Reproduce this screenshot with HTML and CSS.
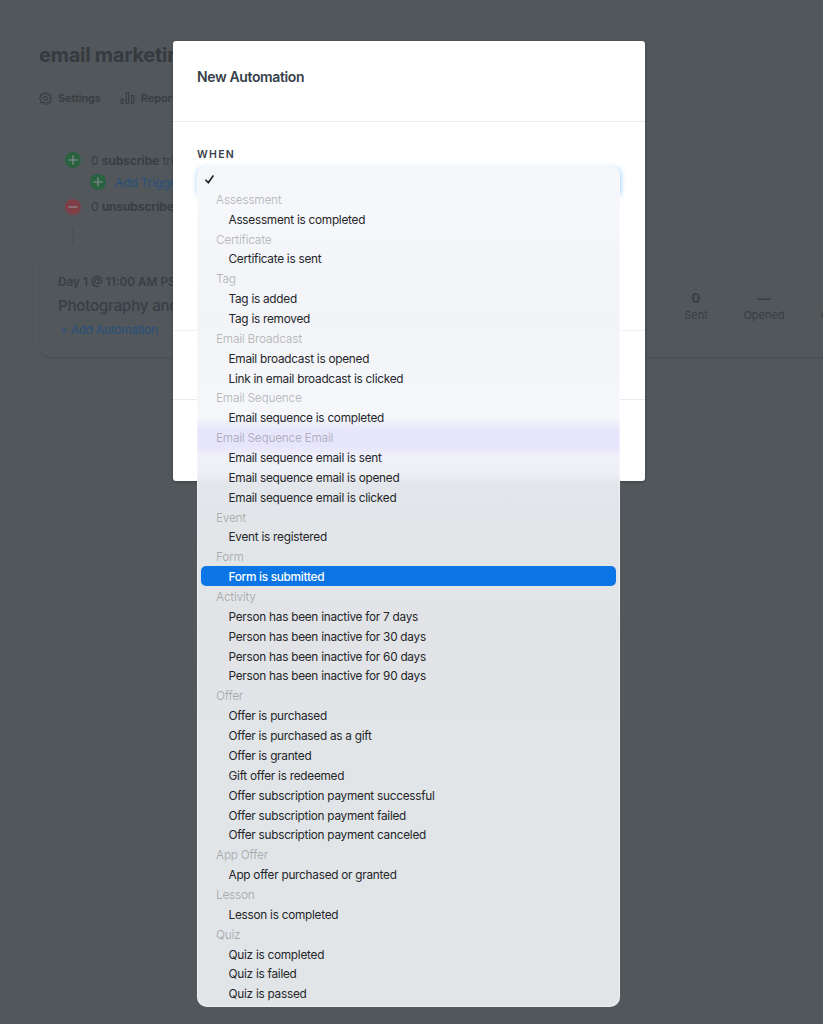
FILE: index.html
```html
<!DOCTYPE html>
<html lang="en">
<head>
    <meta charset="UTF-8">
    <meta name="viewport" content="width=device-width, initial-scale=1.0">
    <title>New Automation</title>
    <link rel="stylesheet" href="styles.css">
</head>
<body>
    <main class="page">
        <h1 class="page-title">email marketing</h1>

        <nav class="toolbar">
            <a class="tool">
                <svg width="13" height="13" viewBox="0 0 24 24" fill="none" stroke="currentColor" stroke-width="2" stroke-linejoin="round">
                    <path d="M10 1.500h4l.7 2.800 1.800.8 2.500-1.500 2.400 2.400-1.500 2.500.8 1.800 2.300.7v2l-2.300.7-.8 1.800 1.500 2.500-2.400 2.400-2.500-1.500-1.800.8-.7 2.800h-4l-.7-2.800-1.800-.8L5 20.400 2.600 18l1.500-2.500-.8-1.800L1 13v-2l2.300-.7.8-1.800L2.600 6 5 3.600l2.500 1.500 1.800-.8z"/>
                    <circle cx="12" cy="12" r="3.5"/>
                </svg>
                Settings
            </a>
            <a class="tool">
                <svg width="15" height="14" viewBox="0 0 15 14" fill="none" stroke="currentColor" stroke-width="1.1">
                    <rect x="1" y="8" width="2.2" height="4.5" rx=".5"/>
                    <rect x="6.2" y="1.5" width="2.4" height="11" rx=".5"/>
                    <rect x="11.4" y="4.5" width="2.4" height="8" rx=".5"/>
                </svg>
                Reports
            </a>
        </nav>

        <div class="triggers">
            <div class="trigger">
                <svg class="dot green" viewBox="0 0 16 16"><circle cx="8" cy="8" r="8"/><path d="M8 4v8M4 8h8"/></svg>
                <span>0 <b>subscribe</b> tri</span>
            </div>
            <div class="trigger nested">
                <svg class="dot green" viewBox="0 0 16 16"><circle cx="8" cy="8" r="8"/><path d="M8 4v8M4 8h8"/></svg>
                <a class="link">Add Trigger</a>
            </div>
            <div class="trigger">
                <svg class="dot red" viewBox="0 0 16 16"><circle cx="8" cy="8" r="8"/><path d="M4 8h8"/></svg>
                <span>0 <b>unsubscribe</b></span>
            </div>
        </div>
        <div class="connector"></div>

        <section class="email-card">
            <div class="email-info">
                <div class="email-time">Day 1 @ 11:00 AM PST</div>
                <div class="email-name">Photography and</div>
                <a class="link add-automation">+ Add Automation</a>
            </div>
            <div class="stats">
                <div class="stat"><b>0</b><span>Sent</span></div>
                <div class="stat"><b>—</b><span>Opened</span></div>
                <div class="stat"><span class="clicked">Clicked</span></div>
            </div>
        </section>
    </main>

    <div class="modal">
        <header class="modal-header">New Automation</header>
        <div class="modal-when">
            <label class="field-label">When</label>
            <div class="select"></div>
        </div>
        <div class="modal-then"></div>
        <footer class="modal-footer"></footer>
    </div>

    <ul class="menu">
        <li class="option current">
            <svg class="check" width="9" height="9" viewBox="0 0 9 9"><path d="M1 5.2 3.3 7.8 8 1"/></svg>
        </li>
        <li class="group">Assessment</li>
        <li class="option">Assessment is completed</li>
        <li class="group">Certificate</li>
        <li class="option">Certificate is sent</li>
        <li class="group">Tag</li>
        <li class="option">Tag is added</li>
        <li class="option">Tag is removed</li>
        <li class="group">Email Broadcast</li>
        <li class="option">Email broadcast is opened</li>
        <li class="option">Link in email broadcast is clicked</li>
        <li class="group">Email Sequence</li>
        <li class="option">Email sequence is completed</li>
        <li class="group">Email Sequence Email</li>
        <li class="option">Email sequence email is sent</li>
        <li class="option">Email sequence email is opened</li>
        <li class="option">Email sequence email is clicked</li>
        <li class="group">Event</li>
        <li class="option">Event is registered</li>
        <li class="group">Form</li>
        <li class="option active">Form is submitted</li>
        <li class="group">Activity</li>
        <li class="option">Person has been inactive for 7 days</li>
        <li class="option">Person has been inactive for 30 days</li>
        <li class="option">Person has been inactive for 60 days</li>
        <li class="option">Person has been inactive for 90 days</li>
        <li class="group">Offer</li>
        <li class="option">Offer is purchased</li>
        <li class="option">Offer is purchased as a gift</li>
        <li class="option">Offer is granted</li>
        <li class="option">Gift offer is redeemed</li>
        <li class="option">Offer subscription payment successful</li>
        <li class="option">Offer subscription payment failed</li>
        <li class="option">Offer subscription payment canceled</li>
        <li class="group">App Offer</li>
        <li class="option">App offer purchased or granted</li>
        <li class="group">Lesson</li>
        <li class="option">Lesson is completed</li>
        <li class="group">Quiz</li>
        <li class="option">Quiz is completed</li>
        <li class="option">Quiz is failed</li>
        <li class="option">Quiz is passed</li>
    </ul>
</body>
</html>
```
FILE: styles.css
```css
* {
    margin: 0;
    padding: 0;
    box-sizing: border-box;
}

body {
    position: relative;
    height: 1024px;
    overflow: hidden;
    background: #51575b;
    font-family: Inter, "Liberation Sans", sans-serif;
    font-size: 12px;
    color: #383e46;
}

/* Page behind the modal */
.page {
    height: 1024px;
    padding: 41px 0 0 39px;
    overflow: hidden;
}

.page-title {
    font-size: 20px;
    line-height: 28px;
    font-weight: 700;
    letter-spacing: -0.25px;
    color: #353a3f;
}

.toolbar {
    display: flex;
    gap: 19px;
    margin-top: 20px;
    height: 18px;
}

.tool {
    display: flex;
    align-items: center;
    gap: 6px;
    font-size: 11px;
    font-weight: 600;
    letter-spacing: -0.1px;
    color: #383d42;
}

.triggers {
    display: flex;
    flex-direction: column;
    padding: 42px 0 0 26px;
}

.trigger {
    display: flex;
    align-items: center;
    gap: 10px;
    height: 22px;
    font-size: 12px;
    letter-spacing: -0.12px;
}

.trigger.nested {
    gap: 9px;
    padding-left: 25px;
}

.trigger:last-child {
    height: 27px;
}

.trigger b {
    font-weight: 700;
}

.dot {
    width: 16px;
    height: 16px;
}

.dot path {
    stroke: #71827c;
    stroke-width: 1.6;
    stroke-linecap: round;
}

.green circle {
    fill: #29623f;
}

.red circle {
    fill: #7e4046;
}

.red path {
    stroke: #8f7f82;
}

.link {
    color: #29507c;
}

.connector {
    width: 2px;
    height: 16px;
    margin: 8px 0 0 33px;
    background: #4c5256;
}

.email-card {
    display: flex;
    justify-content: space-between;
    width: 900px;
    height: 108px;
    margin-top: 7px;
    padding: 20px 56px 0 18px;
    border: 1px solid #4e5459;
    border-bottom: 2px solid #4b5156;
    border-radius: 12px;
}

.email-info {
    display: flex;
    flex-direction: column;
}

.email-time {
    font-size: 11.8px;
    font-weight: 600;
    line-height: 20px;
}

.email-name {
    font-size: 15px;
    font-weight: 500;
    line-height: 27px;
    letter-spacing: -0.15px;
}

.add-automation {
    padding-left: 2px;
    line-height: 21px;
    letter-spacing: -0.28px;
}

.stats {
    display: flex;
    padding-top: 17px;
}

.stat {
    display: flex;
    flex-direction: column;
    align-items: center;
    width: 68px;
    font-size: 11px;
    line-height: 17px;
}

.stat:last-child {
    width: 84px;
    padding-top: 18px;
}

.stat b {
    font-size: 13px;
    line-height: 18px;
}

/* Modal */
.modal {
    position: absolute;
    top: 41px;
    left: 173px;
    width: 472px;
    height: 440px;
    display: flex;
    flex-direction: column;
    background: #fff;
    border-radius: 3px;
    box-shadow: 0 1px 3px rgba(0, 0, 0, 0.25);
}

.modal-header {
    height: 81px;
    padding: 26px 24px 0;
    border-bottom: 1px solid #e9eaec;
    font-size: 14px;
    font-weight: 600;
    line-height: 20px;
    letter-spacing: -0.38px;
    color: #363f49;
}

.modal-when {
    height: 209px;
    padding: 24px 24px 0;
    border-bottom: 1px solid #f1f1f2;
}

.field-label {
    display: block;
    font-size: 10.5px;
    font-weight: 600;
    line-height: 17px;
    letter-spacing: 1.3px;
    text-transform: uppercase;
    color: #363f49;
}

.select {
    height: 30px;
    margin-top: 5px;
    border: 1px solid #c4e0ff;
    border-radius: 7px;
    box-shadow: 0 0 5px 1px #c4e0ff;
}

.modal-then {
    height: 69px;
    border-bottom: 1px solid #e9eaec;
}

.modal-footer {
    flex: 1;
}

/* Dropdown list */
.menu {
    position: absolute;
    top: 166px;
    left: 197px;
    width: 423px;
    height: 841px;
    padding: 3px 4px;
    list-style: none;
    border-radius: 10px;
    box-shadow: inset 0 0 0 1px rgba(255, 255, 255, 0.4);
    background: linear-gradient(
        #f4f6f7 0,
        #f6f7fb 40px,
        #f3f5f9 100px,
        #f3f4f7 160px,
        #f5f7fb 250px,
        #f5f6fa 252px,
        #e8e6fc 264px,
        #e7e5fb 280px,
        #f1f1f9 292px,
        #eff1f6 304px,
        #e3e6ea 318px,
        #e2e5e8 400px,
        #e2e3e7 460px,
        #e1e5e8 560px
    );
}

.option,
.group {
    height: 19.87px;
    line-height: 23px;
    font-size: 11.8px;
    letter-spacing: -0.26px;
    white-space: nowrap;
}

.option {
    padding-left: 27.5px;
    color: #242629;
}

.group {
    padding-left: 15px;
    color: rgba(0, 0, 0, 0.26);
}

.option.current {
    display: flex;
    align-items: center;
    padding: 2px 0 0 4px;
}

.check path {
    fill: none;
    stroke: #1d1f21;
    stroke-width: 1.6;
    stroke-linecap: round;
    stroke-linejoin: round;
}

.option.active {
    background: #0b75e6;
    border-radius: 5px;
    color: #fff;
    font-weight: 500;
    letter-spacing: -0.28px;
}
```
